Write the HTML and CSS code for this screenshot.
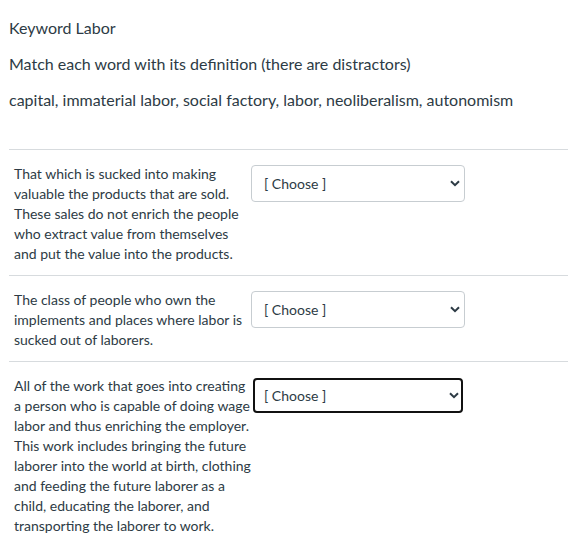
FILE: index.html
```html
<!DOCTYPE html>
<html lang="en">
<head>
<meta charset="utf-8">
<title>Keyword Labor</title>
<link rel="stylesheet" href="styles.css">
</head>
<body>
<div class="quiz">
  <div class="intro">
    <p>Keyword Labor</p>
    <p>Match each word with its definition (there are distractors)</p>
    <p>capital, immaterial labor, social factory, labor, neoliberalism, autonomism</p>
  </div>
  <div class="answers">
    <div class="row">
      <div class="def">That which is sucked into making valuable the products that are sold. These sales do not enrich the people who extract value from themselves and put the value into the products.</div>
      <div class="pick">
        <select class="choose"><option>[ Choose ]</option></select>
        <svg class="chev" width="10" height="7" viewBox="0 0 10 7"><path d="M1 1.2 L5 5.2 L9 1.2" fill="none" stroke="#2d3b45" stroke-width="2"/></svg>
      </div>
    </div>
    <div class="row">
      <div class="def">The class of people who own the implements and places where labor is sucked out of laborers.</div>
      <div class="pick">
        <select class="choose"><option>[ Choose ]</option></select>
        <svg class="chev" width="10" height="7" viewBox="0 0 10 7"><path d="M1 1.2 L5 5.2 L9 1.2" fill="none" stroke="#2d3b45" stroke-width="2"/></svg>
      </div>
    </div>
    <div class="row last">
      <div class="def">All of the work that goes into creating a person who is capable of doing wage labor and thus enriching the employer. This work includes bringing the future laborer into the world at birth, clothing and feeding the future laborer as a child, educating the laborer, and transporting the laborer to work.</div>
      <div class="pick focus">
        <select class="choose active"><option>[ Choose ]</option></select>
        <svg class="chev" width="10" height="7" viewBox="0 0 10 7"><path d="M1 1.2 L5 5.2 L9 1.2" fill="none" stroke="#2d3b45" stroke-width="2"/></svg>
      </div>
    </div>
  </div>
</div>
</body>
</html>
```
FILE: styles.css
```css
* { box-sizing: border-box; }
html, body { margin: 0; padding: 0; background: #fff; }
body {
  font-family: Lato, "Open Sans", sans-serif;
  color: #2d3b45;
}
.quiz { padding: 18px 0 0 9px; }
.intro p {
  margin: 0 0 16px 0;
  font-size: 16px;
  line-height: 20px;
}
.intro { padding-bottom: 23px; }
.answers { border-top: 1px solid #d7dbde; }
.row {
  display: flex;
  align-items: flex-start;
  padding: 14px 0 11px 5px;
  border-bottom: 1px solid #d7dbde;
}
.row.last { border-bottom: none; }
.def {
  width: 237px;
  font-size: 14px;
  line-height: 20px;
  flex: none;
}
.pick {
  position: relative;
  margin-top: 1px;
  width: 214px;
  height: 37px;
  flex: none;
}
.pick.focus { margin-top: 2px; margin-left: 2px; width: 210px; height: 35px; }
.choose {
  appearance: none;
  -webkit-appearance: none;
  width: 100%;
  height: 100%;
  border: 1px solid #c7cdd1;
  border-radius: 4px;
  background: #fff;
  font-family: Lato, "Open Sans", sans-serif;
  font-size: 14px;
  color: #2d3b45;
  padding: 0 0 0 12px;
  margin: 0;
  outline: none;
}
.choose.active {
  border: 2px solid #111;
  padding-left: 9px;
}
.chev {
  position: absolute;
  right: 5px;
  top: 15px;
  pointer-events: none;
}
.focus .chev { top: 14px; right: 4px; }
```
